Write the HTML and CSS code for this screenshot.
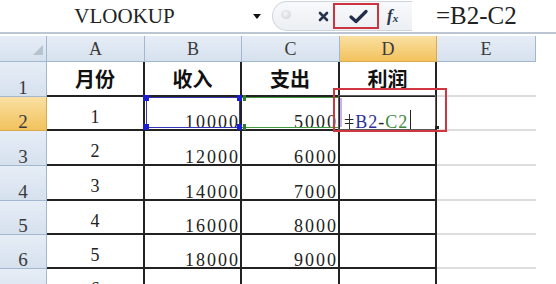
FILE: index.html
```html
<!DOCTYPE html>
<html lang="zh-CN">
<head>
    <meta charset="UTF-8">
    <title>利润公式</title>
    <link rel="stylesheet" href="styles.css">
</head>
<body>

    <!-- Formula Bar -->
    <div class="formula-bar">
        <div class="name-box">VLOOKUP</div>
        <div class="name-arrow"><span class="tri"></span></div>
        <div class="tools">
            <span class="dimple"></span>
            <svg class="icon-x" width="11" height="11" viewBox="0 0 11 11">
                <path d="M2 2L9 9M9 2L2 9" stroke="#26344f" stroke-width="2.6" stroke-linecap="round"/>
            </svg>
            <span class="enter-box">
                <svg class="icon-check" width="19" height="15" viewBox="0 0 19 15">
                    <path d="M2 8L7 12.5L17 2.5" fill="none" stroke="#1f2d4a" stroke-width="3.2" stroke-linecap="round" stroke-linejoin="round"/>
                </svg>
            </span>
            <span class="fx"><i>f</i><sub>x</sub></span>
        </div>
        <div class="formula">=B2-C2</div>
    </div>

    <!-- Sheet -->
    <div class="sheet">
        <div class="corner">
            <svg width="10" height="10" viewBox="0 0 10 10"><polygon points="10,0 10,10 0,10" fill="#b6c2d0"/></svg>
        </div>
        <div class="col-head">A</div>
        <div class="col-head">B</div>
        <div class="col-head">C</div>
        <div class="col-head sel">D</div>
        <div class="col-head">E</div>

        <div class="row-head">1</div>
        <div class="cell title">月份</div>
        <div class="cell title">收入</div>
        <div class="cell title">支出</div>
        <div class="cell title">利润</div>
        <div class="cell blank"></div>

        <div class="row-head sel">2</div>
        <div class="cell month">1</div>
        <div class="cell num">10000
            <span class="frame-blue"></span>
            <span class="handle blue tl"></span>
            <span class="handle blue tr"></span>
            <span class="handle blue bl"></span>
            <span class="handle blue br"></span>
        </div>
        <div class="cell num">5000
            <span class="frame-green"></span>
            <span class="handle green gl"></span>
            <span class="handle green gb"></span>
        </div>
        <div class="cell edit">
            <span class="edit-box"></span>
            <span class="eq">=</span><span class="ref-blue">B2</span>-<span class="ref-green">C2</span><span class="caret"></span>
            <span class="fill"></span>
            <span class="mark"></span>
        </div>
        <div class="cell blank"></div>

        <div class="row-head">3</div>
        <div class="cell month">2</div>
        <div class="cell num">12000</div>
        <div class="cell num">6000</div>
        <div class="cell"></div>
        <div class="cell blank"></div>

        <div class="row-head">4</div>
        <div class="cell month">3</div>
        <div class="cell num">14000</div>
        <div class="cell num">7000</div>
        <div class="cell"></div>
        <div class="cell blank"></div>

        <div class="row-head">5</div>
        <div class="cell month">4</div>
        <div class="cell num">16000</div>
        <div class="cell num">8000</div>
        <div class="cell"></div>
        <div class="cell blank"></div>

        <div class="row-head">6</div>
        <div class="cell month">5</div>
        <div class="cell num">18000</div>
        <div class="cell num">9000</div>
        <div class="cell"></div>
        <div class="cell blank"></div>

        <div class="row-head"></div>
        <div class="cell month">6</div>
        <div class="cell"></div>
        <div class="cell"></div>
        <div class="cell"></div>
        <div class="cell blank"></div>
    </div>

</body>
</html>
```

FILE: styles.css
```css
/* General */
body {
    margin: 0;
    width: 556px;
    height: 284px;
    overflow: hidden;
    background: #fff;
    font-family: "Liberation Serif", serif;
    color: #222;
}

/* Formula Bar */
.formula-bar {
    display: flex;
    align-items: center;
    height: 32px;
    border-bottom: 2px solid #bcc6d2;
    margin-bottom: 2px;
}

.name-box {
    width: 249px;
    text-align: center;
    font-size: 21px;
    color: #222;
}

.name-arrow {
    width: 16px;
    display: flex;
    justify-content: center;
}

.tri {
    width: 0;
    height: 0;
    border-left: 4px solid transparent;
    border-right: 4px solid transparent;
    border-top: 5px solid #111;
}

.tools {
    display: flex;
    align-items: center;
    box-sizing: border-box;
    width: 140px;
    height: 30px;
    margin-left: 7px;
    padding-left: 8px;
    border: 1px solid #cfd5dd;
    border-right: none;
    border-radius: 15px 0 0 15px;
    background: linear-gradient(#f8f9fb, #eceff3);
}

.dimple {
    width: 10px;
    height: 9px;
    border-radius: 50%;
    background: radial-gradient(circle at 45% 40%, #f4f5f7, #c9ced5);
    margin-top: -3px;
}

.icon-x {
    margin-left: 27px;
}

.enter-box {
    display: flex;
    align-items: center;
    box-sizing: border-box;
    width: 46px;
    height: 26px;
    margin-left: 4px;
    padding-left: 14px;
    border: 2px solid #cc3540;
}

.fx {
    margin-left: 8px;
    font: bold italic 17px "Liberation Serif", serif;
    color: #26344f;
}

.fx sub {
    font-size: 11px;
    vertical-align: -1px;
}

.formula {
    padding-left: 24px;
    font-size: 25px;
    color: #222;
}

/* Sheet Grid */
.sheet {
    display: grid;
    grid-template-columns: 47px 98px 97px 98px 97px 99px;
    grid-template-rows: 26px 35px 34px 35px 35px 34px 34px 34px;
}

.corner,
.col-head,
.row-head {
    background: linear-gradient(#e6edf6, #d6e1ee);
    border-right: 1px solid #a3b8d0;
    border-bottom: 1px solid #a3b8d0;
    color: #3a3a3a;
}

.corner {
    display: flex;
    align-items: flex-end;
    justify-content: flex-end;
    padding: 0 3px 6px 0;
}

.col-head {
    display: flex;
    align-items: center;
    justify-content: center;
    padding-top: 2px;
    font-size: 18px;
}

.row-head {
    display: flex;
    align-items: flex-end;
    justify-content: center;
    padding-bottom: 2px;
    font-size: 19px;
    line-height: 13px;
}

.col-head.sel,
.row-head.sel {
    background: linear-gradient(#fae0a2, #f2c25e);
    border-color: #d9a94e;
}

/* Cells */
.cell {
    position: relative;
    display: flex;
    border-right: 2px solid #222;
    border-bottom: 2px solid #222;
    font-size: 18px;
    line-height: 13px;
    letter-spacing: 2px;
}

.cell.title {
    align-items: center;
    justify-content: center;
    font: bold 20px/1 "Noto Sans CJK SC", sans-serif;
    letter-spacing: 0;
    color: #111;
}

.cell.month {
    align-items: center;
    justify-content: center;
    padding-top: 7px;
    line-height: 18px;
    letter-spacing: 0;
}

.cell.num {
    align-items: flex-end;
    justify-content: flex-end;
}

.cell.blank {
    border-right: none;
    border-bottom: 2px solid #dddddd;
}

/* Formula references */
.frame-blue {
    position: absolute;
    left: 1px;
    top: 0;
    right: 0;
    bottom: 1px;
    border: 1px solid #3636b5;
}

.frame-green {
    position: absolute;
    left: 0;
    top: 0;
    right: 0;
    bottom: 1px;
    border-top: 1px solid #3f9a42;
    border-bottom: 1px solid #3f9a42;
}

.handle {
    position: absolute;
    width: 6px;
    height: 6px;
    background: #1c1cd0;
}

.handle.tl { left: -2px; top: -2px; }
.handle.tr { right: -2px; top: -2px; width: 5px; }
.handle.bl { left: -2px; bottom: -1px; }
.handle.br { right: -2px; bottom: -1px; width: 5px; }

.handle.green {
    background: #2f7d2f;
    width: 3px;
    left: 1px;
}

.handle.gl { top: -2px; }
.handle.gb { bottom: -1px; }

/* Editing cell */
.cell.edit {
    align-items: flex-end;
    padding-left: 4px;
    letter-spacing: 1px;
}

.edit-box {
    position: absolute;
    left: -2px;
    top: -2px;
    right: -1px;
    bottom: -1px;
    border: 1px solid #5a5a5a;
}

.edit-box::before {
    content: "";
    position: absolute;
    left: 1px;
    top: 2px;
    bottom: 2px;
    width: 2px;
    background: #cfb0e6;
}

.eq {
    position: relative;
}

.eq::after {
    content: "";
    position: absolute;
    left: 5px;
    top: -2px;
    width: 1px;
    height: 15px;
    background: #333;
}

.ref-blue {
    color: #2d2f9a;
}

.ref-green {
    color: #3c8a3e;
}

.caret {
    display: inline-block;
    width: 1px;
    height: 20px;
    margin-left: 2px;
    margin-bottom: -1px;
    background: #222;
}

.fill {
    position: absolute;
    right: -4px;
    bottom: -1px;
    width: 4px;
    height: 4px;
    background: #222;
}

/* Red annotation */
.mark {
    position: absolute;
    z-index: 2;
    left: -7px;
    top: -9px;
    right: -12px;
    bottom: -3px;
    border: 2px solid #d1353f;
}
```
